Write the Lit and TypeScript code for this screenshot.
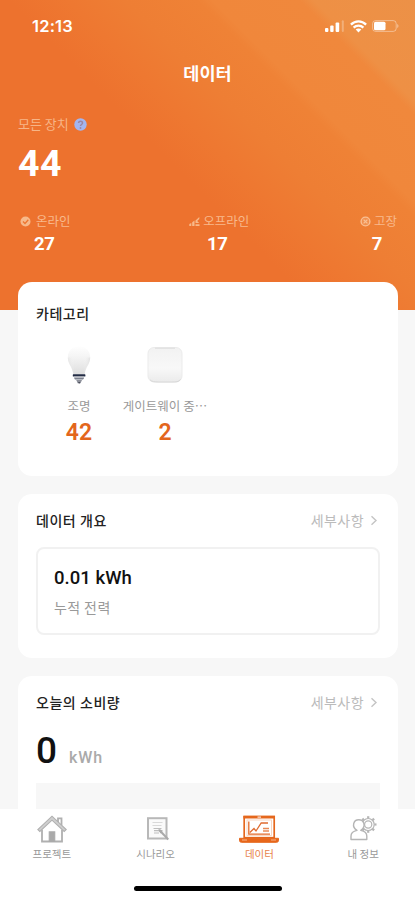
import { LitElement, html, css, svg } from "lit";
import { customElement } from "lit/decorators.js";
import { classMap } from "lit/directives/class-map.js";

const signal = html`<svg width="20" height="13" viewBox="0 0 20 13"><g fill="#fff"><rect x="0" y="8" width="3.400" height="4" rx="1"/><rect x="5.200" y="5.500" width="3.400" height="6.500" rx="1"/><rect x="10.600" y="2.400" width="3.600" height="9.600" rx="1"/><rect x="16.800" y="0.200" width="2" height="11.800" rx="1" opacity=".28"/></g></svg>`;
const wifi = html`<svg width="17" height="13" viewBox="0 0 17 13"><g fill="none" stroke="#fff" stroke-width="2.300"><path d="M.9 4.600C5.300.3 11.700 .3 16.100 4.600"/><path d="M3.600 7.600C6.400 4.900 10.600 4.900 13.400 7.600"/></g><path d="M5.700 9.500C7.300 8.100 9.700 8.100 11.300 9.500L8.500 12.400Z" fill="#fff"/></svg>`;
const battery = html`<svg width="27" height="12" viewBox="0 0 27 12"><rect x=".6" y=".6" width="23.600" height="10.800" rx="3" fill="none" stroke="#fff" stroke-opacity=".4"/><rect x="2" y="1.800" width="11.500" height="8.400" rx="1.500" fill="#fff"/><path d="M25.300 4v4c1.500-.6 1.500-3.400 0-4Z" fill="#fff" opacity=".5"/></svg>`;
const online = html`<svg width="11" height="11" viewBox="0 0 11 11"><circle cx="5.500" cy="5.500" r="5" fill="#f7b98a"/><path d="M3 5.500l2 2 3.300-3.700" fill="none" stroke="#ed752f" stroke-width="1.300"/></svg>`;
const offline = html`<svg width="11" height="11" viewBox="0 0 11 11"><g fill="#f7b98a"><path d="M.3 10V8l2-1v3zM3.200 10V6.300L5.500 4.500V10zM6.500 10V8.300h4V10zM6.500 4.600 10.300 1v2L8.200 5l2 2H6.500z"/></g></svg>`;
const fault = html`<svg width="11" height="11" viewBox="0 0 11 11"><circle cx="5.500" cy="5.500" r="4.400" fill="#f1904e" stroke="#f9bf93" stroke-width="1.400"/><path d="M3.600 3.600l3.800 3.800M7.400 3.600 3.600 7.400" stroke="#f9bf93" stroke-width="1.300"/></svg>`;
const help = html`<svg width="13" height="13" viewBox="0 0 13 13"><circle cx="6.500" cy="6.500" r="6.200" fill="#a3b5f0"/><path d="M4.600 5.100C4.600 2.600 8.500 2.600 8.500 5 8.500 6.500 6.500 6.500 6.500 8.100" fill="none" stroke="#9b86a5" stroke-width="1.500"/><circle cx="6.500" cy="10" r=".9" fill="#9b86a5"/></svg>`;
const chevron = html`<svg width="8" height="11" viewBox="0 0 8 11"><path d="M1.500 1.200 6 5.500 1.500 9.800" fill="none" stroke="#c4c4c4" stroke-width="1.400"/></svg>`;

const bulb = html`<svg width="40" height="42" viewBox="0 0 40 42">
  <defs>
    <linearGradient id="glass" x1="0" y1="0" x2="0" y2="1"><stop offset="0" stop-color="#fefefe"/><stop offset=".35" stop-color="#f5f5f5"/><stop offset="1" stop-color="#dedede"/></linearGradient>
    <linearGradient id="side" x1="0" y1="0" x2="1" y2="0"><stop offset="0" stop-color="#d8d8d8" stop-opacity=".4"/><stop offset=".3" stop-color="#fff" stop-opacity="0"/><stop offset=".7" stop-color="#fff" stop-opacity="0"/><stop offset="1" stop-color="#cfcfcf" stop-opacity=".45"/></linearGradient>
  </defs>
  <path d="M20 2.500C13 2.500 8.800 7 8.800 13.500 8.800 20 13.500 22.500 14.300 30.500H25.700C26.500 22.500 31.200 20 31.200 13.500 31.200 7 27 2.500 20 2.500Z" fill="url(#glass)"/>
  <path d="M8.800 13.500C8.800 20 13.500 22.500 14.300 30.500H25.700C26.500 22.500 31.200 20 31.200 13.500Z" fill="url(#side)"/>
  <rect x="13.800" y="30.300" width="12.600" height="2.200" rx=".6" fill="#232c45"/>
  <path d="M14.800 32.500H25.400L24 36H16Z" fill="#b9bcc4"/><path d="M15.500 34h9.200v.9h-9.200z" fill="#777c89"/>
  <path d="M17.200 36H23l-1.500 3.200h-2.800Z" fill="#8e919b"/><path d="M19 38.200h2.400l-1.200 1.600Z" fill="#333744"/></svg>`;
const gateway = html`<svg width="40" height="42" viewBox="0 0 40 42">
  <defs><linearGradient id="gw" x1="0" y1="0" x2="0" y2="1"><stop offset="0" stop-color="#f2f2f2"/><stop offset=".6" stop-color="#f8f8f8"/><stop offset="1" stop-color="#ebebeb"/></linearGradient></defs>
  <rect x="3" y="3.500" width="34" height="34.500" rx="6" fill="url(#gw)" stroke="#ebebeb" stroke-width="1"/>
  <path d="M10 4.200H30" stroke="#dcdcdc" stroke-width="1"/><path d="M5 35.800C7 38 10 37.800 13 38H27C31 38 33.500 38 35.500 35.500" fill="none" stroke="#d8d8d8" stroke-width="1"/></svg>`;

const gearTeeth = Array.from({ length: 8 }, (_, i) => {
  const a = (i * Math.PI) / 4;
  return svg`<line x1=${21.2 + Math.cos(a) * 6.2} y1=${9.5 + Math.sin(a) * 6.2} x2=${21.2 + Math.cos(a) * 8.3} y2=${9.5 + Math.sin(a) * 8.3}/>`;
});

const tabs = [
  {
    label: "프로젝트", icon: html`<svg width="32" height="30" viewBox="0 0 32 30"><g fill="none" stroke="#b0b0b0" stroke-width="1.800"><path d="M6 15.800V27.500H26V15.800"/><path d="M22 8V4.300H25.500V11.300"/><path d="M1.800 15.600 16 2.200 30.200 15.600 28.200 17.500 16 6.200 3.800 17.500Z" fill="#cfcfcf" stroke-width="1.100"/><rect x="13.200" y="17.800" width="5.600" height="9.600" fill="#aaa" stroke="#aaa" stroke-width="1"/></g></svg>`,
  },
  {
    label: "시나리오", icon: html`<svg width="32" height="30" viewBox="0 0 32 30"><rect x="8" y="4.200" width="18.500" height="20.300" fill="#fafafa" stroke="#b8b8b8" stroke-width="2"/><path d="M12.500 8.500h10M12.500 11.500h9" stroke="#d9d9d9" stroke-width="1"/><path d="M13.500 14.500h8M14 16.700h6M14 19h5" stroke="#bdbdbd" stroke-width="1.200"/><path d="M19.500 16.300 28.300 25.500" stroke="#aaa" stroke-width="2"/><path d="M18.300 14.800 23 16.800 20.300 19.500Z" fill="#aaa"/></svg>`,
  },
  {
    label: "데이터", active: true, icon: html`<svg width="42" height="30" viewBox="0 0 42 30"><rect x="6.200" y="2.700" width="30" height="21" fill="#fff" stroke="#e5671c" stroke-width="1.700"/><path d="M5.400 3.100H37" stroke="#e5671c" stroke-width="2.800"/><path d="M19.500 3.100h3.500" stroke="#fff" stroke-width="1"/><rect x="9" y="6" width="24.400" height="15.500" fill="none" stroke="#f7ccb2" stroke-width=".8"/><path d="M10.800 7.500V20.200H32" fill="none" stroke="#e36a29" stroke-width="1.300"/><path d="M11.800 18.500 16 14.500 18 17 23.200 9H30" fill="none" stroke="#df6b30" stroke-width="1.300"/><path d="M25 14.500h6M25 17h6" stroke="#e78a57" stroke-width="1.500"/><path d="M1.500 24.300H40.500V26.500Q40.500 28.300 38.500 28.300H3.500Q1.500 28.300 1.500 26.500Z" fill="#e8671b" stroke="#e5671c"/><path d="M4 26h5M33 26h5" stroke="#f6b68d" stroke-width="1"/></svg>`,
  },
  {
    label: "내 정보", icon: html`<svg width="32" height="30" viewBox="0 0 32 30"><g fill="none" stroke="#b5b5b5" stroke-width="1.200" stroke-linejoin="round"><circle cx="21.200" cy="10.500" r="6"/><circle cx="21.200" cy="10.500" r="3.600"/><g stroke-width="2.200" transform="translate(0 1)">${gearTeeth}</g><path d="M4 25.500V22C4 18.500 7 17 10 16.400 4.100 12.500 6.500 5.700 11.800 5.700 17.100 5.700 19.500 12.500 13.800 16.400 17 17 19.800 18.500 19.800 22V25.500Z" fill="#fff" stroke-width="1.400"/></g></svg>`,
  },
];

const stats = [
  { cls: "s1", icon: online, label: "온라인", value: "27" },
  { cls: "s2", icon: offline, label: "오프라인", value: "17" },
  { cls: "s3", icon: fault, label: "고장", value: "7" },
];

@customElement("app-root")
export class AppRoot extends LitElement {
  static styles = css`
    :host { display: flex; flex-direction: column; width: 415px; height: 900px; overflow: hidden; background: #f7f7f7; color: #222; font-family: "Noto Sans CJK KR", sans-serif; }
    * { box-sizing: border-box; }
    svg { display: block; flex: none; }
    .num { font-family: Roboto, "Noto Sans CJK KR", sans-serif; font-weight: 700; }
    .scroll { height: 809px; overflow: hidden; flex: none; }
    .hero { height: 310px; padding: 0 18px; color: #fff; background: linear-gradient(45deg, #ed722e 0%, #ed722e 44%, #ee7831 52%, #ee7e34 60%, #ef8236 70%, #f0873b 72%, #f0883c 84%, #ee9045 86%, #ec9147 100%); }
    .status { height: 52px; display: flex; align-items: center; padding: 0 0 0 14px; }
    .clock { font-family: Inter, sans-serif; font-weight: 600; font-size: 16.5px; letter-spacing: .2px; line-height: 20px; flex: 1; }
    .indicators { display: flex; align-items: center; gap: 5px; margin-right: -2px; }
    .title { height: 44px; line-height: 42px; text-align: center; font-size: 17.5px; font-weight: 700; }
    .all { display: flex; align-items: center; gap: 5px; height: 20px; margin-top: 18px; color: #f7b587; font-size: 13px; line-height: 20px; }
    .total { height: 40px; line-height: 40px; margin-top: 9px; font-size: 37.5px; letter-spacing: .5px; }
    .stats { display: flex; justify-content: space-between; margin-top: 28px; }
    .statLabel { display: flex; align-items: center; gap: 5px; height: 20px; line-height: 20px; font-size: 12.5px; color: #f8b98c; }
    .s2 .statLabel, .s3 .statLabel { gap: 3px; }
    .statValue { height: 20px; line-height: 20px; margin-top: 3px; font-size: 18.5px; letter-spacing: -.3px; text-align: center; }
    .s1 { padding-left: 2px; }
    .s1 .statValue { padding-right: 2px; }
    .s2 { margin-left: 8px; }
    .s2 .statValue { padding-right: 4px; }
    .s3 .statValue { padding-right: 3px; }
    .cards { display: flex; flex-direction: column; gap: 18px; padding: 0 17px 0 18px; margin-top: -28px; }
    .card { background: #fff; border-radius: 14px; padding: 13px 18px 0; }
    .category { height: 194px; padding-top: 18px; }
    .overview { height: 164px; }
    .today { height: 240px; }
    .head { display: flex; align-items: center; height: 26px; line-height: 26px; font-size: 14px; font-weight: 500; letter-spacing: .55px; }
    .head span { flex: 1; }
    .more { display: flex; align-items: center; gap: 6px; padding-right: 2px; color: #bbb; font-weight: 400; font-size: 14px; letter-spacing: .45px; }
    .items { display: flex; margin-top: 18px; }
    .item { width: 86px; display: flex; flex-direction: column; align-items: center; }
    .itemLabel { height: 20px; line-height: 20px; margin-top: 10px; font-size: 12.5px; color: #999; white-space: nowrap; }
    .itemValue { height: 26px; line-height: 26px; margin-top: 4px; font-size: 23px; font-weight: 600; color: #e3661c; }
    .box { height: 88px; margin-top: 14px; border: 2px solid #f1f1f1; border-radius: 8px; padding: 17px 16px 0; }
    .energy { height: 24px; line-height: 24px; font-size: 18.5px; font-weight: 500; color: #111; letter-spacing: .05px; }
    .caption { height: 20px; line-height: 19px; margin-top: 8px; font-size: 14px; letter-spacing: .4px; color: #999; }
    .reading { display: flex; align-items: baseline; gap: 12px; height: 44px; line-height: 44px; margin-top: 14px; }
    .zero { font-size: 37px; font-weight: 500; color: #111; }
    .unit { font-size: 16px; font-weight: 500; color: #aaa; letter-spacing: .9px; }
    .chart { height: 120px; margin-top: 10px; background: #f7f7f7; }
    .tabbar { flex: none; height: 91px; background: #fff; display: flex; flex-direction: column; }
    .tabs { display: flex; height: 77px; padding-top: 5px; }
    .tab { flex: 1; display: flex; flex-direction: column; align-items: center; color: #999; font-size: 10.5px; line-height: 16px; gap: 2px; }
    .tab.active { color: #e8824a; }
    .home { width: 148px; height: 5px; border-radius: 3px; background: #000; margin: 0 auto; }
  `;

  render() {
    return html`
      <main class="scroll">
        <header class="hero">
          <div class="status"><span class="clock">12:13</span><div class="indicators">${signal}${wifi}${battery}</div></div>
          <div class="title">데이터</div>
          <div class="all"><span>모든 장치</span>${help}</div>
          <div class="total num">44</div>
          <div class="stats">
            ${stats.map((s) => html`<div class=${s.cls}><div class="statLabel">${s.icon}<span>${s.label}</span></div><div class="statValue num">${s.value}</div></div>`)}
          </div>
        </header>
        <div class="cards">
          <section class="card category">
            <div class="head"><span>카테고리</span></div>
            <div class="items">
              <div class="item">${bulb}<div class="itemLabel">조명</div><div class="itemValue num">42</div></div>
              <div class="item">${gateway}<div class="itemLabel">게이트웨이 중⋯</div><div class="itemValue num">2</div></div>
            </div>
          </section>
          <section class="card overview">
            <div class="head"><span>데이터 개요</span><div class="more">세부사항 ${chevron}</div></div>
            <div class="box"><div class="energy num">0.01 kWh</div><div class="caption">누적 전력</div></div>
          </section>
          <section class="card today">
            <div class="head"><span>오늘의 소비량</span><div class="more">세부사항 ${chevron}</div></div>
            <div class="reading"><div class="zero num">0</div><div class="unit num">kWh</div></div>
            <div class="chart"></div>
          </section>
        </div>
      </main>
      <nav class="tabbar">
        <div class="tabs">${tabs.map((t) => html`<div class=${classMap({ tab: true, active: !!t.active })}>${t.icon}<div>${t.label}</div></div>`)}</div>
        <div class="home"></div>
      </nav>
    `;
  }
}
